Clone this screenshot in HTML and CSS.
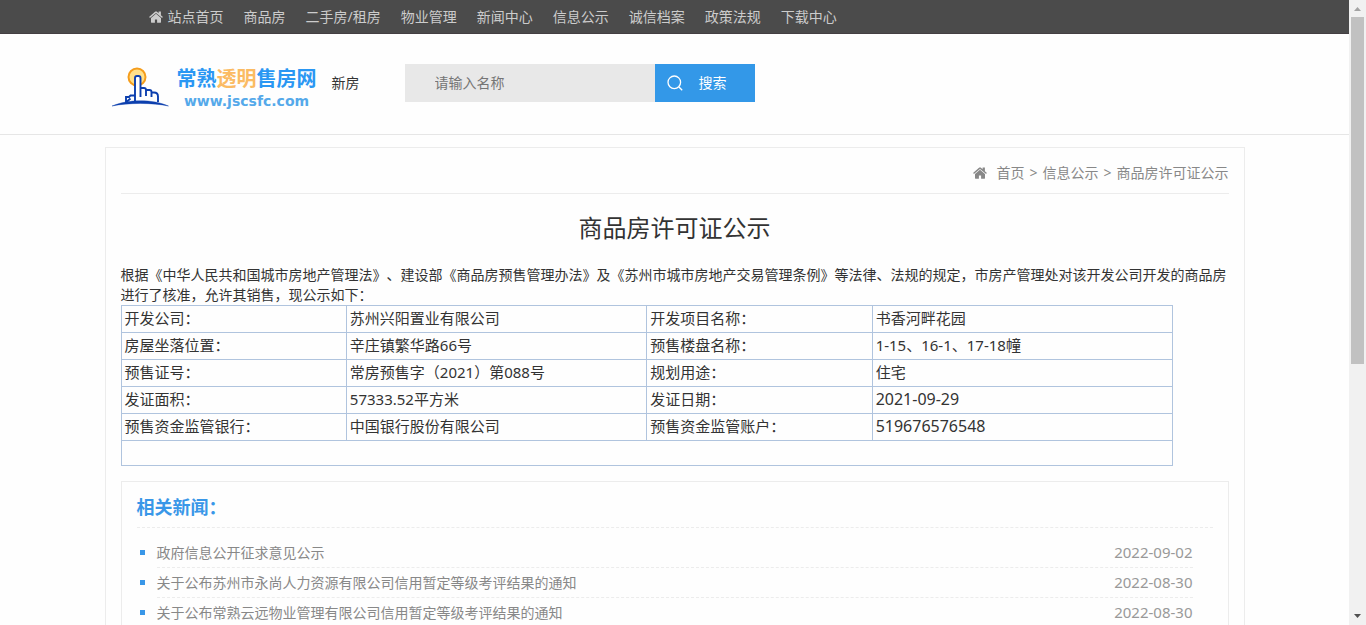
FILE: index.html
```html
<!DOCTYPE html>
<html lang="zh-CN">
<head>
<meta charset="utf-8">
<meta name="viewport" content="width=device-width, initial-scale=1">
<title>商品房许可证公示</title>
<link rel="stylesheet" href="styles.css">
</head>
<body>
<div class="page">
  <nav class="topbar">
    <ul class="topbar-list">
      <li><a href="#"><svg class="icon-home" viewBox="0 0 14 12" aria-hidden="true"><path d="M7 2.700 2 6.900v4.300c0 .3.2.5.5.5h3.400V8.400h2.200v3.300h3.400c.3 0 .5-.2.5-.5V6.900z"/><path d="M13.700 5.800 11.900 4.200V.8c0-.2-.1-.3-.3-.3H9.900c-.2 0-.3.100-.3.3v1.400L7.700.600c-.4-.3-1-.3-1.400 0L.3 5.800c-.1.100-.1.300 0 .4l.5.600c.1.100.3.100.4 0L7 2l5.800 4.800c.1.1.3.1.4 0l.5-.6c.1-.1.1-.3 0-.4z"/></svg>站点首页</a></li>
      <li><a href="#">商品房</a></li>
      <li><a href="#">二手房/租房</a></li>
      <li><a href="#">物业管理</a></li>
      <li><a href="#">新闻中心</a></li>
      <li><a href="#">信息公示</a></li>
      <li><a href="#">诚信档案</a></li>
      <li><a href="#">政策法规</a></li>
      <li><a href="#">下载中心</a></li>
    </ul>
  </nav>

  <header class="header">
    <div class="header-inner">
      <a class="logo" href="#">
        <svg class="logo-mark" viewBox="0 0 60 44" aria-hidden="true">
          <circle cx="26" cy="11" r="8.500" fill="#ffe08a" stroke="#f59d1c" stroke-width="2"/>
          <path d="M24 36V12q0-2 2-2h1.500q2 0 2 2v24z" fill="#fff"/>
          <path d="M24 35V12q0-2 2-2h1.500q2 0 2 2v19M29.500 22H33q2 0 2 2v6M35 24h3.500q2 0 2 2v5M40.500 26.500h2.500q4 0 4 4V36M24 29.500h-4.500L18 31h-3v5M19.500 32.500l-3.500 3" fill="none" stroke="#0c3fae" stroke-width="1.900"/>
          <path d="M1 40C17 33 42 33 57.500 40 42 36.600 17 36.600 1 40z" fill="#0c3fae" stroke="#0c3fae" stroke-width=".4"/>
        </svg>
        <span class="logo-text">
          <span class="logo-name">常熟<span class="logo-accent">透明</span>售房网</span>
          <span class="logo-url">www.jscsfc.com</span>
        </span>
      </a>
      <a class="category" href="#">新房</a>
      <form class="search">
        <input class="search-input" type="text" placeholder="请输入名称" aria-label="请输入名称">
        <button class="search-button" type="button"><svg class="icon-search" viewBox="0 0 16 16" aria-hidden="true"><circle cx="7.300" cy="7.300" r="6.300"/><path d="m12 12 3.200 3.200"/></svg>搜索</button>
      </form>
    </div>
  </header>

  <main class="card">
    <div class="breadcrumb">
      <svg class="icon-home" viewBox="0 0 14 12" aria-hidden="true"><path d="M7 2.700 2 6.900v4.300c0 .3.2.5.5.5h3.400V8.400h2.200v3.300h3.400c.3 0 .5-.2.5-.5V6.900z"/><path d="M13.700 5.800 11.900 4.200V.8c0-.2-.1-.3-.3-.3H9.900c-.2 0-.3.100-.3.3v1.400L7.700.600c-.4-.3-1-.3-1.400 0L.3 5.800c-.1.100-.1.300 0 .4l.5.600c.1.100.3.100.4 0L7 2l5.800 4.800c.1.1.3.1.4 0l.5-.6c.1-.1.1-.3 0-.4z"/></svg>
      <a href="#">首页</a><span>&gt;</span><a href="#">信息公示</a><span>&gt;</span><a href="#">商品房许可证公示</a>
    </div>
    <h1 class="title">商品房许可证公示</h1>
    <p class="intro">根据《中华人民共和国城市房地产管理法》、建设部《商品房预售管理办法》及《苏州市城市房地产交易管理条例》等法律、法规的规定，市房产管理处对该开发公司开发的商品房进行了核准，允许其销售，现公示如下：</p>
    <table class="permit">
      <colgroup><col class="col-label"><col class="col-value"><col class="col-label"><col class="col-value"></colgroup>
      <tbody>
        <tr><th scope="row">开发公司：</th><td>苏州兴阳置业有限公司</td><th scope="row">开发项目名称：</th><td>书香河畔花园</td></tr>
        <tr><th scope="row">房屋坐落位置：</th><td>辛庄镇繁华路66号</td><th scope="row">预售楼盘名称：</th><td>1-15、16-1、17-18幢</td></tr>
        <tr><th scope="row">预售证号：</th><td>常房预售字（2021）第088号</td><th scope="row">规划用途：</th><td>住宅</td></tr>
        <tr><th scope="row">发证面积：</th><td>57333.52平方米</td><th scope="row">发证日期：</th><td class="numeric">2021-09-29</td></tr>
        <tr><th scope="row">预售资金监管银行：</th><td>中国银行股份有限公司</td><th scope="row">预售资金监管账户：</th><td class="numeric">519676576548</td></tr>
        <tr class="empty-row"><td colspan="4"></td></tr>
      </tbody>
    </table>

    <section class="news">
      <h2 class="news-title">相关新闻：</h2>
      <ul class="news-list">
        <li><a href="#">政府信息公开征求意见公示</a><time>2022-09-02</time></li>
        <li><a href="#">关于公布苏州市永尚人力资源有限公司信用暂定等级考评结果的通知</a><time>2022-08-30</time></li>
        <li><a href="#">关于公布常熟云远物业管理有限公司信用暂定等级考评结果的通知</a><time>2022-08-30</time></li>
      </ul>
    </section>
  </main>
</div>
<div class="scrollbar" aria-hidden="true">
  <svg class="scroll-arrow scroll-up" viewBox="0 0 17 17"><path d="M5 11h7L8.500 7z"/></svg>
  <div class="scroll-thumb"></div>
  <div class="scroll-rest"></div>
  <svg class="scroll-arrow scroll-down" viewBox="0 0 17 17"><path d="M5 6h7l-3.500 4z"/></svg>
</div>
</body>
</html>
```
FILE: styles.css
```css
* {
  box-sizing: border-box;
}

body {
  display: flex;
  height: 100vh;
  margin: 0;
  overflow: hidden;
  background: #fefefe;
  color: #333;
  font-family: "Noto Sans", "Noto Sans CJK SC", sans-serif;
  font-size: 14px;
  line-height: 20px;
  text-spacing-trim: space-all;
}

a {
  color: inherit;
  text-decoration: none;
}

ul {
  margin: 0;
  padding: 0;
  list-style: none;
}

.page {
  flex: 1;
  min-width: 0;
  overflow: hidden;
}

/* Top navigation */
.topbar {
  background: #4b4b4b;
  border-bottom: 1px solid #443f42;
  color: #ccc;
}

.topbar-list {
  display: flex;
  gap: 20px;
  max-width: 1140px;
  margin: 0 auto;
  padding: 0 44px;
  line-height: 33px;
  white-space: nowrap;
}

.topbar-list a {
  display: flex;
  align-items: center;
}

.topbar .icon-home {
  margin-right: 5px;
}

.icon-home {
  width: 14px;
  height: 12px;
  fill: currentColor;
}

/* Header */
.header {
  border-bottom: 1px solid #e6e6e6;
}

.header-inner {
  display: flex;
  align-items: center;
  max-width: 1140px;
  height: 100px;
  margin: 0 auto;
  padding: 0 6px 2px;
}

.logo {
  display: flex;
  align-items: center;
  width: 221px;
  gap: 6px;
}

.logo-mark {
  flex: none;
  width: 60px;
  height: 44px;
  margin-top: 10px;
}

.logo-text {
  display: flex;
  flex-direction: column;
  align-items: center;
  padding-top: 12px;
  white-space: nowrap;
}

.logo-name {
  color: #2a97f3;
  font-size: 20px;
  font-weight: 700;
  line-height: 24px;
}

.logo-accent {
  color: #fbbb63;
}

.logo-url {
  color: #55a9ea;
  font-family: "DejaVu Sans", sans-serif;
  font-size: 14px;
  font-weight: 700;
  line-height: 20px;
}

.category {
  width: 73px;
}

.search {
  display: flex;
  height: 38px;
}

.search-input {
  width: 250px;
  padding: 0 30px;
  border: 0;
  background: #e8e8e8;
  color: #333;
  font: inherit;
}

.search-input::placeholder {
  color: #757575;
}

.search-button {
  display: flex;
  align-items: center;
  gap: 16px;
  width: 100px;
  padding: 0 12px;
  border: 0;
  background: #3398e8;
  color: #fff;
  font: inherit;
}

.icon-search {
  width: 16px;
  height: 16px;
  fill: none;
  stroke: #fff;
  stroke-width: 1.3;
}

/* Content card */
.card {
  max-width: 1140px;
  margin: 12px auto 0;
  padding: 0 15px 15px;
  border: 1px solid #ececec;
}

.breadcrumb {
  display: flex;
  align-items: center;
  justify-content: flex-end;
  gap: 5px;
  height: 46px;
  padding-top: 5px;
  border-bottom: 1px solid #ececec;
  color: #888;
}

.breadcrumb .icon-home {
  margin-right: 4px;
}

.title {
  margin: 16px 0 19px;
  font-size: 24px;
  font-weight: 400;
  line-height: 36px;
  text-align: center;
}

.intro {
  margin: 0;
}

.permit {
  width: 95%;
  table-layout: fixed;
  border-collapse: collapse;
  font-size: 15px;
}

.col-label {
  width: 21.43%;
}

.col-value {
  width: 28.57%;
}

.permit th,
.permit td {
  padding: 2px 3px 4px;
  border: 1px solid #b0c4de;
  font-weight: 400;
  text-align: left;
}

.permit .numeric {
  font-size: 16px;
}

.permit .empty-row td {
  height: 25px;
}

/* Related news */
.news {
  margin-top: 15px;
  padding: 10px 15px;
  border: 1px solid #ececec;
}

.news-title {
  margin: 0;
  padding-bottom: 5px;
  border-bottom: 1px dashed #ececec;
  color: #3997e8;
  font-size: 18px;
  line-height: 30px;
}

.news-list {
  padding: 10px 20px 0;
}

.news-list li {
  display: flex;
  position: relative;
  justify-content: space-between;
  border-bottom: 1px dashed #ececec;
  color: #888;
  line-height: 29px;
}

.news-list li::before {
  position: absolute;
  top: 12px;
  left: -17px;
  width: 5px;
  height: 5px;
  background: #3997e8;
  content: "";
}

.news-list time {
  color: #999;
  font-size: 15px;
}

/* Scroll bar */
.scrollbar {
  display: flex;
  flex: 0 0 17px;
  flex-direction: column;
  background: #f1f1f1;
}

.scroll-arrow {
  flex: none;
  width: 17px;
  height: 17px;
}

.scroll-up {
  fill: #a3a3a3;
}

.scroll-down {
  fill: #505050;
}

.scroll-thumb {
  flex: 347;
  margin: 0 2px;
  background: #c1c1c1;
}

.scroll-rest {
  flex: 244;
}
```
